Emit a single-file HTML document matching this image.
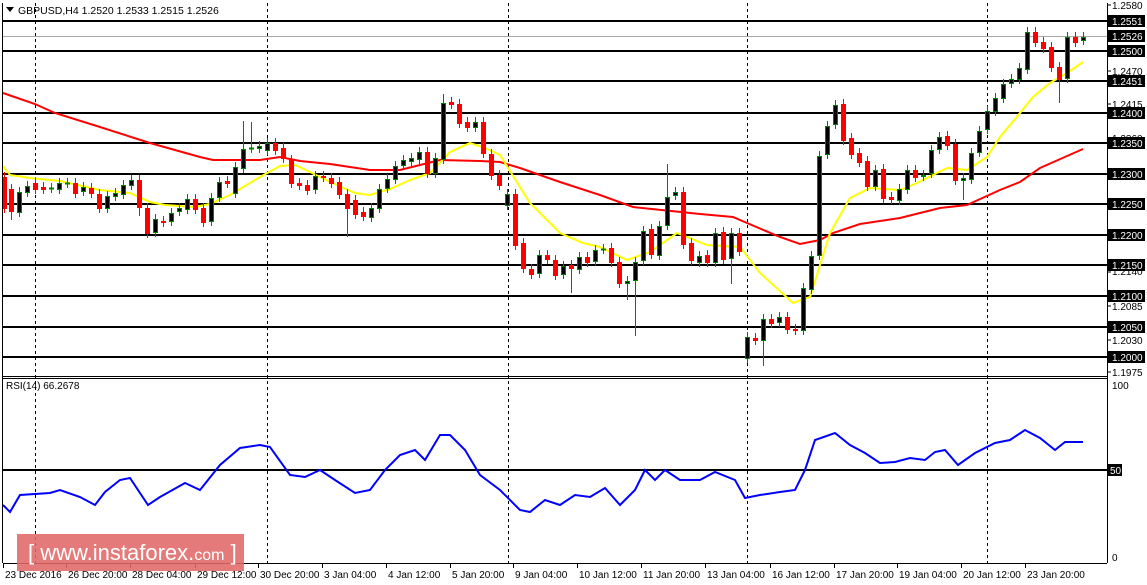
<!DOCTYPE html>
<html><head><meta charset="utf-8"><style>
html,body{margin:0;padding:0;background:#fff;width:1147px;height:585px;overflow:hidden}
svg{display:block;font-family:"Liberation Sans",sans-serif;font-size:10px}
</style></head><body>
<svg id="s" width="1147" height="585" viewBox="0 0 1147 585" xmlns="http://www.w3.org/2000/svg">
<rect width="1147" height="585" fill="#fff"/>
<g stroke="#000" stroke-width="1" stroke-dasharray="3,3">
<line x1="35.5" y1="3" x2="35.5" y2="563"/><line x1="267.5" y1="3" x2="267.5" y2="563"/><line x1="508.5" y1="3" x2="508.5" y2="563"/><line x1="747.5" y1="3" x2="747.5" y2="563"/><line x1="987.5" y1="3" x2="987.5" y2="563"/>
</g>
<line x1="3" y1="36.5" x2="1107" y2="36.5" stroke="#aaa"/>
<g stroke="#000" stroke-width="2">
<line x1="3" y1="21" x2="1107" y2="21"/><line x1="3" y1="51" x2="1107" y2="51"/><line x1="3" y1="81" x2="1107" y2="81"/><line x1="3" y1="113" x2="1107" y2="113"/><line x1="3" y1="143" x2="1107" y2="143"/><line x1="3" y1="174" x2="1107" y2="174"/><line x1="3" y1="204" x2="1107" y2="204"/><line x1="3" y1="235" x2="1107" y2="235"/><line x1="3" y1="265" x2="1107" y2="265"/><line x1="3" y1="296" x2="1107" y2="296"/><line x1="3" y1="327" x2="1107" y2="327"/><line x1="3" y1="357" x2="1107" y2="357"/><line x1="3" y1="470" x2="1107" y2="470"/>
</g>
<polyline fill="none" stroke="#f00" stroke-width="2" points="3,93 35,104 55,113 100,127 150,143 200,157 213,160 260,160 280,157 300,161 330,164 370,170 400,170 440,160 480,161 500,162 520,168 560,182 600,195 633,207 700,214 733,217 747,223 780,237 800,244 820,240 833,233 860,224 900,218 940,208 967,205 1000,190 1020,182 1040,168 1083,149"/>
<polyline fill="none" stroke="#ff0" stroke-width="2" points="3,166 10,175 30,178 60,181 100,190 130,193 150,202 165,205 195,207 210,204 230,195 260,177 280,166 295,165 310,172 330,182 355,193 370,195 390,189 410,180 430,173 450,152 470,143 485,148 500,155 530,203 560,233 583,243 600,247 627,260 650,252 677,233 707,245 740,247 760,273 793,303 810,297 830,233 850,198 870,188 900,190 917,183 947,168 967,170 987,157 1000,137 1020,113 1033,97 1050,83 1067,73 1083,62"/>
<g id="c"></g>
<polyline fill="none" stroke="#00f" stroke-width="2" points="3,505 10,512 20,495 50,493 60,490 80,497 95,505 105,492 120,480 130,478 148,505 160,497 185,483 200,490 220,465 240,448 260,445 270,447 290,475 305,477 320,470 335,480 355,493 370,490 385,470 400,455 415,450 425,460 440,435 450,435 465,450 480,475 500,490 520,510 530,512 545,500 560,505 575,495 590,497 605,488 620,505 635,490 645,470 655,480 665,470 680,480 700,480 715,472 735,480 745,498 760,495 780,492 795,490 805,470 815,440 835,433 850,445 865,453 880,463 895,462 910,458 925,460 935,452 945,450 958,465 975,453 995,443 1010,440 1025,430 1040,438 1055,450 1065,442 1083,442"/>
<g stroke="#000" fill="none">
<line x1="2.5" y1="3" x2="2.5" y2="563"/>
<line x1="1107.5" y1="3" x2="1107.5" y2="563"/>
<line x1="3" y1="376.5" x2="1107" y2="376.5"/><line x1="3" y1="378.5" x2="1107" y2="378.5"/>
<line x1="3" y1="563.5" x2="1107" y2="563.5"/>
</g>
<polygon points="6,7 14,7 10,12" fill="#000"/>
<text x="18" y="14" font-size="10.5">GBPUSD,H4  1.2520 1.2533 1.2515 1.2526</text>
<text x="6" y="389" font-size="10">RSI(14) 66.2678</text>
<g font-size="10">
<text x="1112" y="9">1.2580</text><text x="1112" y="75">1.2470</text><text x="1112" y="108">1.2415</text><text x="1112" y="142">1.2360</text><text x="1112" y="275">1.2140</text><text x="1112" y="310">1.2085</text><text x="1112" y="344">1.2030</text><text x="1112" y="376">1.1975</text>
<text x="1112" y="389">100</text><text x="1112" y="561">0</text>
</g>
<g id="lb"></g>
<g stroke="#000"><line x1="1107" x2="1111" y1="5" y2="5"/><line x1="1107" x2="1111" y1="71" y2="71"/><line x1="1107" x2="1111" y1="104" y2="104"/><line x1="1107" x2="1111" y1="272" y2="272"/><line x1="1107" x2="1111" y1="306" y2="306"/><line x1="1107" x2="1111" y1="340" y2="340"/><line x1="1107" x2="1111" y1="372" y2="372"/></g>
<g id="tl" font-size="10"></g>
<rect x="17" y="534" width="227" height="37" fill="#e06868" opacity="0.88"/>
<text x="28" y="560" fill="#fff" font-size="22">[ www.instaforex.<tspan font-size="16">com</tspan> ]</text>
</svg>
<script>
var NS="http://www.w3.org/2000/svg";
function el(p,t,a){var e=document.createElementNS(NS,t);for(var k in a)e.setAttribute(k,a[k]);p.appendChild(e);return e;}
var C=[[4,177,208,'r'],[11,189,211,'r',220],[19,192,212,'g'],[27,186,192,'g'],[35,183,189,'r'],[43,187,189,'r'],[51,188,188,'g'],[59,183,189,'g'],[67,183,183,'g'],[75,183,193,'r'],[83,187,191,'g'],[91,188,193,'r'],[99,194,208,'r'],[107,196,208,'g'],[115,193,196,'g'],[123,185,194,'g'],[131,180,185,'g'],[139,180,207,'r',216],[147,208,233,'r'],[155,219,232,'g'],[163,221,222,'r'],[171,213,221,'g'],[179,208,211,'g'],[187,199,209,'g'],[195,199,209,'r'],[203,208,222,'r'],[211,198,221,'g'],[219,182,197,'g'],[227,181,183,'r'],[235,167,193,'g'],[243,149,168,'g',0,121],[251,148,148,'g',0,122],[259,146,148,'g'],[267,143,150,'g'],[275,143,150,'r'],[283,148,158,'r'],[291,160,183,'r'],[299,183,185,'r'],[307,185,190,'r'],[315,176,189,'g'],[323,176,177,'r'],[331,178,183,'r'],[339,182,194,'r'],[347,194,208,'r',237],[355,200,214,'r'],[363,212,216,'r'],[371,208,217,'g'],[379,189,208,'g'],[387,179,188,'g'],[395,166,179,'g'],[403,160,165,'g'],[411,158,161,'g'],[419,152,159,'g'],[427,152,173,'r'],[435,158,173,'g'],[443,103,159,'g',0,94],[451,102,104,'r'],[459,104,123,'r'],[467,122,127,'r'],[475,122,127,'g'],[483,122,153,'r'],[491,154,175,'r'],[499,175,185,'r'],[507,194,205,'g'],[515,194,245,'r'],[523,243,268,'r'],[531,269,274,'r'],[539,255,273,'g'],[547,255,259,'r'],[555,260,275,'r'],[563,266,274,'g'],[571,265,268,'r',293],[579,257,269,'g'],[587,257,262,'r'],[595,250,261,'g'],[603,249,249,'g'],[611,248,262,'r'],[619,262,283,'r'],[627,281,283,'g',300],[635,262,280,'g',336],[643,231,260,'g'],[651,229,254,'r'],[659,226,255,'g'],[667,197,225,'g',0,164],[675,192,195,'g'],[683,192,244,'r'],[691,243,260,'r'],[699,256,262,'g'],[707,255,262,'r'],[715,233,262,'g'],[723,232,259,'r'],[731,233,258,'g',284],[739,233,251,'r'],[747,337,358,'g'],[755,338,340,'r'],[763,319,340,'g',366],[771,319,323,'r'],[779,317,322,'g'],[787,317,329,'r'],[795,329,330,'r'],[803,288,330,'g'],[811,256,289,'g'],[819,156,255,'g'],[827,126,154,'g'],[835,105,124,'g'],[843,104,140,'r'],[851,138,154,'r'],[859,153,162,'r'],[867,161,186,'r'],[875,170,186,'g'],[883,169,198,'r'],[891,197,199,'r'],[899,189,200,'g'],[907,170,189,'g'],[915,170,177,'r'],[923,175,176,'g'],[931,150,173,'g'],[939,137,149,'g'],[947,136,145,'r'],[955,144,180,'r'],[963,178,180,'g',200],[971,153,179,'g'],[979,131,152,'g'],[987,111,129,'g'],[995,98,111,'g'],[1003,84,98,'g'],[1011,79,83,'g'],[1019,68,79,'g'],[1027,32,69,'g'],[1035,32,42,'r'],[1043,42,48,'r'],[1051,47,67,'r'],[1059,67,79,'r',103],[1067,37,78,'g'],[1075,37,42,'r'],[1083,37,40,'g']];
var g=document.getElementById('c');
C.forEach(function(c){var x=c[0],t=c[1],b=c[2],up=c[3]=='g';var lo=c[4]||b+5,hi=c[5]||t-5;var col=up?'#008000':'#f00';
el(g,'line',{x1:x+.5,x2:x+.5,y1:hi,y2:lo,stroke:col});
if(b-t<1)el(g,'line',{x1:x-2,x2:x+3,y1:t+.5,y2:t+.5,stroke:col,'stroke-width':2});
else if(up)el(g,'rect',{x:x-1.5,y:t+.5,width:4,height:b-t,fill:'#000',stroke:col});
else el(g,'rect',{x:x-2,y:t,width:5,height:b-t+1,fill:'#f00'});});
var L=[[21,'1.2551'],[36,'1.2526'],[51,'1.2500'],[81,'1.2451'],[113,'1.2400'],[143,'1.2350'],[174,'1.2300'],[204,'1.2250'],[235,'1.2200'],[265,'1.2150'],[296,'1.2100'],[327,'1.2050'],[357,'1.2000']];
var lb=document.getElementById('lb');
L.forEach(function(l){el(lb,'rect',{x:1108,y:l[0]-6,width:37,height:12,fill:'#000'});var t=el(lb,'text',{x:1112,y:l[0]+4,fill:'#fff'});t.textContent=l[1];});
el(lb,'rect',{x:1108,y:464,width:14,height:12,fill:'#000'});var t5=el(lb,'text',{x:1110,y:474,fill:'#fff'});t5.textContent='50';
var T=[[3,'23 Dec 2016'],[66,'26 Dec 20:00'],[130,'28 Dec 04:00'],[195,'29 Dec 12:00'],[258,'30 Dec 20:00'],[322,'3 Jan 04:00'],[386,'4 Jan 12:00'],[450,'5 Jan 20:00'],[513,'9 Jan 04:00'],[577,'10 Jan 12:00'],[641,'11 Jan 20:00'],[705,'13 Jan 04:00'],[770,'16 Jan 12:00'],[834,'17 Jan 20:00'],[897,'19 Jan 04:00'],[961,'20 Jan 12:00'],[1025,'23 Jan 20:00']];
var tl=document.getElementById('tl');
T.forEach(function(a){el(tl,'line',{x1:a[0]+.5,x2:a[0]+.5,y1:564,y2:568,stroke:'#000'});var t=el(tl,'text',{x:a[0]+2,y:578});t.textContent=a[1];});
</script>
</body></html>
